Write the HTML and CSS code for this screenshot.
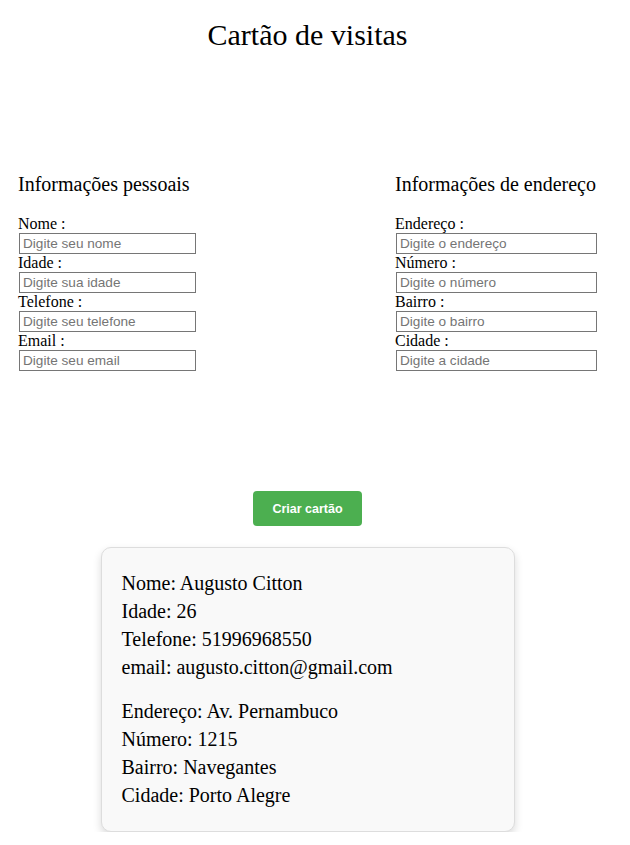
FILE: index.html
```html
<!DOCTYPE html>
<html lang="pt-BR">
<head>
<meta charset="utf-8">
<title>Cartão de visitas</title>
<link rel="stylesheet" href="styles.css">
</head>
<body>
 <div class="page">
  <h1 class="title">Cartão de visitas</h1>
  <div class="forms">
    <section class="group group-left">
      <h3 class="group-title">Informações pessoais</h3>
      <label class="field-label">Nome :</label>
      <input class="field" type="text" placeholder="Digite seu nome">
      <label class="field-label">Idade :</label>
      <input class="field" type="text" placeholder="Digite sua idade">
      <label class="field-label">Telefone :</label>
      <input class="field" type="text" placeholder="Digite seu telefone">
      <label class="field-label">Email :</label>
      <input class="field" type="text" placeholder="Digite seu email">
    </section>
    <section class="group group-right">
      <h3 class="group-title">Informações de endereço</h3>
      <label class="field-label">Endereço :</label>
      <input class="field field-wide" type="text" placeholder="Digite o endereço">
      <label class="field-label">Número :</label>
      <input class="field field-wide" type="text" placeholder="Digite o número">
      <label class="field-label">Bairro :</label>
      <input class="field field-wide" type="text" placeholder="Digite o bairro">
      <label class="field-label">Cidade :</label>
      <input class="field field-wide" type="text" placeholder="Digite a cidade">
    </section>
  </div>
  <div class="actions">
    <button class="btn" type="button">Criar cartão</button>
  </div>
  <div class="card">
    <div class="card-block">
      <div class="card-line">Nome: Augusto Citton</div>
      <div class="card-line">Idade: 26</div>
      <div class="card-line">Telefone: 51996968550</div>
      <div class="card-line">email: augusto.citton@gmail.com</div>
    </div>
    <div class="card-block">
      <div class="card-line">Endereço: Av. Pernambuco</div>
      <div class="card-line">Número: 1215</div>
      <div class="card-line">Bairro: Navegantes</div>
      <div class="card-line">Cidade: Porto Alegre</div>
    </div>
  </div>
 </div>
</body>
</html>
```

FILE: styles.css
```css
html, body {
  margin: 0;
  padding: 0;
  background: #ffffff;
}

body {
  font-family: "Liberation Serif", "Times New Roman", serif;
  color: #000;
}

.page {
  box-sizing: border-box;
  width: 615px;
  padding: 0 8px;
}

.title {
  margin: 0;
  padding-top: 17px;
  font-size: 30px;
  font-weight: normal;
  line-height: 36px;
  text-align: center;
}

.forms {
  display: flex;
  justify-content: space-between;
  padding: 0 10px;
  margin-top: 120px;
}

.group {
  display: flex;
  flex-direction: column;
  align-items: flex-start;
}

.group-title {
  margin: 0 0 19px;
  font-size: 20px;
  font-weight: normal;
  line-height: 23px;
}

.field-label {
  font-size: 16px;
  line-height: 18px;
  display: block;
}

.field {
  box-sizing: border-box;
  width: 177px;
  height: 21px;
  margin: 0 0 0 1px;
  padding: 1px 3px;
  border: 1px solid #767676;
  border-radius: 0;
  font-family: "Liberation Sans", Arial, sans-serif;
  font-size: 13.6px;
  background: #fff;
}

.field-wide {
  width: 201px;
}

.field::placeholder {
  color: #757575;
}

.actions {
  display: flex;
  justify-content: center;
  margin-top: 120px;
}

.btn {
  width: 109px;
  height: 35px;
  border: none;
  border-radius: 4px;
  background: #4caf50;
  color: #fff;
  font-family: "Liberation Sans", Arial, sans-serif;
  font-size: 12.5px;
  font-weight: bold;
  cursor: pointer;
}

.card {
  box-sizing: border-box;
  width: 414px;
  margin: 21px auto 0;
  padding: 21px 20px 22px;
  background: #f9f9f9;
  border: 1px solid #dddddd;
  border-radius: 10px;
  box-shadow: 0 4px 8px rgba(0, 0, 0, 0.15);
}

.card-block {
  margin: 0;
}

.card-block + .card-block {
  margin-top: 16px;
}

.card-line {
  font-size: 20px;
  line-height: 28px;
}
```
